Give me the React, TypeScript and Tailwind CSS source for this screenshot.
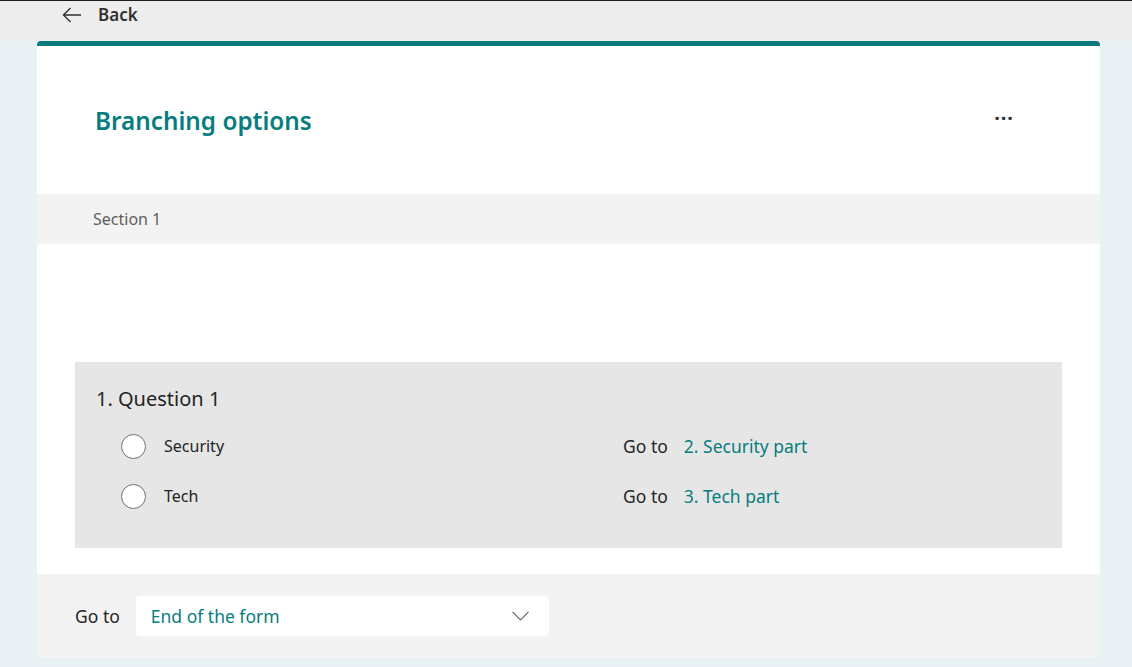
import React from 'react';

type Choice = { label: string; target: string };

const choices: Choice[] = [
  { label: 'Security', target: '2. Security part' },
  { label: 'Tech', target: '3. Tech part' },
];

const font = { fontFamily: '"Noto Sans", "Open Sans", sans-serif' };

export default function App() {
  return (
    <div className="min-h-[667px] w-[1132px] bg-[#e9f1f4] text-[#242424]" style={font}>
      {/* top bar */}
      <div className="h-[41px] border-t border-[#1b1b1b] bg-[#ededed]">
        <button className="flex h-[28px] items-center pl-[62px] text-[#323130]">
          <svg width="20" height="16" viewBox="0 0 20 16" fill="none" stroke="#323130" strokeWidth="1.4">
            <path d="M19 8H1.5M8.5 1L1.5 8l7 7" />
          </svg>
          <span className="ml-[16px] text-[17px] font-semibold">Back</span>
        </button>
      </div>

      <div className="ml-[37px] w-[1063px] rounded-t-[4px] border-t-[5px] border-[#077a7b] bg-white">
        {/* header */}
        <div className="flex h-[148px] items-center justify-between pl-[58px] pr-[86px]">
          <h1 className="mt-[2px] text-[24.3px] font-semibold text-[#077d80]">Branching options</h1>
          <span className="-mt-[4px] text-[20px] font-bold tracking-[1px] text-[#333]">···</span>
        </div>

        <div className="flex h-[50px] items-center bg-[#f3f3f3] pl-[56px] text-[16px] text-[#605e5c]">
          Section 1
        </div>

        <div className="px-[38px] pb-[26px] pt-[118px]">
          <div className="bg-[#e6e6e6] pb-[40px] pl-[21px] pt-[22px]">
            <div className="text-[20px] leading-[30px]">1. Question 1</div>
            <div className="mt-[20px] flex flex-col gap-[26px]">
              {choices.map((c) => (
                <div key={c.label} className="flex h-[24px] items-center">
                  <span className="ml-[25px] h-[25px] w-[25px] rounded-full border border-[#707070] bg-white" />
                  <span className="ml-[18px] w-[459px] text-[16px]">{c.label}</span>
                  <span className="text-[17.5px] text-[#252423]">Go to</span>
                  <span className="ml-[16px] text-[17.5px] text-[#077d80]">{c.target}</span>
                </div>
              ))}
            </div>
          </div>
        </div>

        {/* footer */}
        <div className="flex h-[84px] items-center bg-[#f3f3f3] pl-[38px]">
          <span className="text-[17.5px] text-[#252423]">Go to</span>
          <div className="ml-[16px] flex h-[40px] w-[413px] items-center justify-between rounded-[4px] bg-white pl-[15px] pr-[20px]">
            <span className="text-[17.5px] text-[#077d80]">End of the form</span>
            <svg width="17" height="10" viewBox="0 0 17 10" fill="none" stroke="#6b6b6b" strokeWidth="1.2">
              <path d="M0.5 0.8L8.5 8.8L16.5 0.8" />
            </svg>
          </div>
        </div>
      </div>
    </div>
  );
}
